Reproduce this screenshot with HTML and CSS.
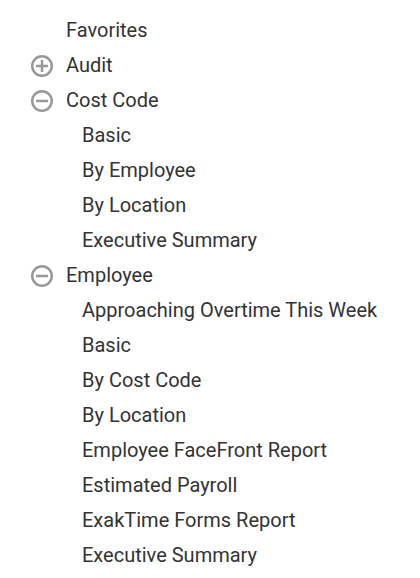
FILE: index.html
```html
<!DOCTYPE html>
<html>
<head>
<meta charset="utf-8">
<link rel="stylesheet" href="styles.css">
</head>
<body>
<ul class="tree">
  <li class="row top"><span class="icon none"></span><span class="label">Favorites</span></li>
  <li class="row top"><svg class="icon" viewBox="0 0 24 24"><circle cx="12" cy="12" r="9.8"/><path d="M6 12h12M12 6v12"/></svg><span class="label">Audit</span></li>
  <li class="row top"><svg class="icon" viewBox="0 0 24 24"><circle cx="12" cy="12" r="9.8"/><path d="M6 12h12"/></svg><span class="label">Cost Code</span></li>
  <li class="row child">Basic</li>
  <li class="row child">By Employee</li>
  <li class="row child">By Location</li>
  <li class="row child">Executive Summary</li>
  <li class="row top"><svg class="icon" viewBox="0 0 24 24"><circle cx="12" cy="12" r="9.8"/><path d="M6 12h12"/></svg><span class="label">Employee</span></li>
  <li class="row child">Approaching Overtime This Week</li>
  <li class="row child">Basic</li>
  <li class="row child">By Cost Code</li>
  <li class="row child">By Location</li>
  <li class="row child">Employee FaceFront Report</li>
  <li class="row child">Estimated Payroll</li>
  <li class="row child">ExakTime Forms Report</li>
  <li class="row child">Executive Summary</li>
</ul>
</body>
</html>
```
FILE: styles.css
```css
html, body {
  margin: 0;
  padding: 0;
  background: #fff;
}
body {
  font-family: Roboto, "Noto Sans", sans-serif;
  font-size: 20px;
  color: #333;
}
.tree {
  list-style: none;
  margin: 0;
  padding: 13px 0 0 0;
}
.row {
  height: 35px;
  line-height: 35px;
  display: flex;
  align-items: center;
  white-space: nowrap;
}
.top {
  padding-left: 30px;
  gap: 12px;
}
.child {
  padding-left: 82px;
}
.icon {
  width: 24px;
  height: 24px;
  flex: none;
  fill: none;
  stroke: #999;
  stroke-width: 2.5;
}
.icon.none {
  display: block;
}
```
